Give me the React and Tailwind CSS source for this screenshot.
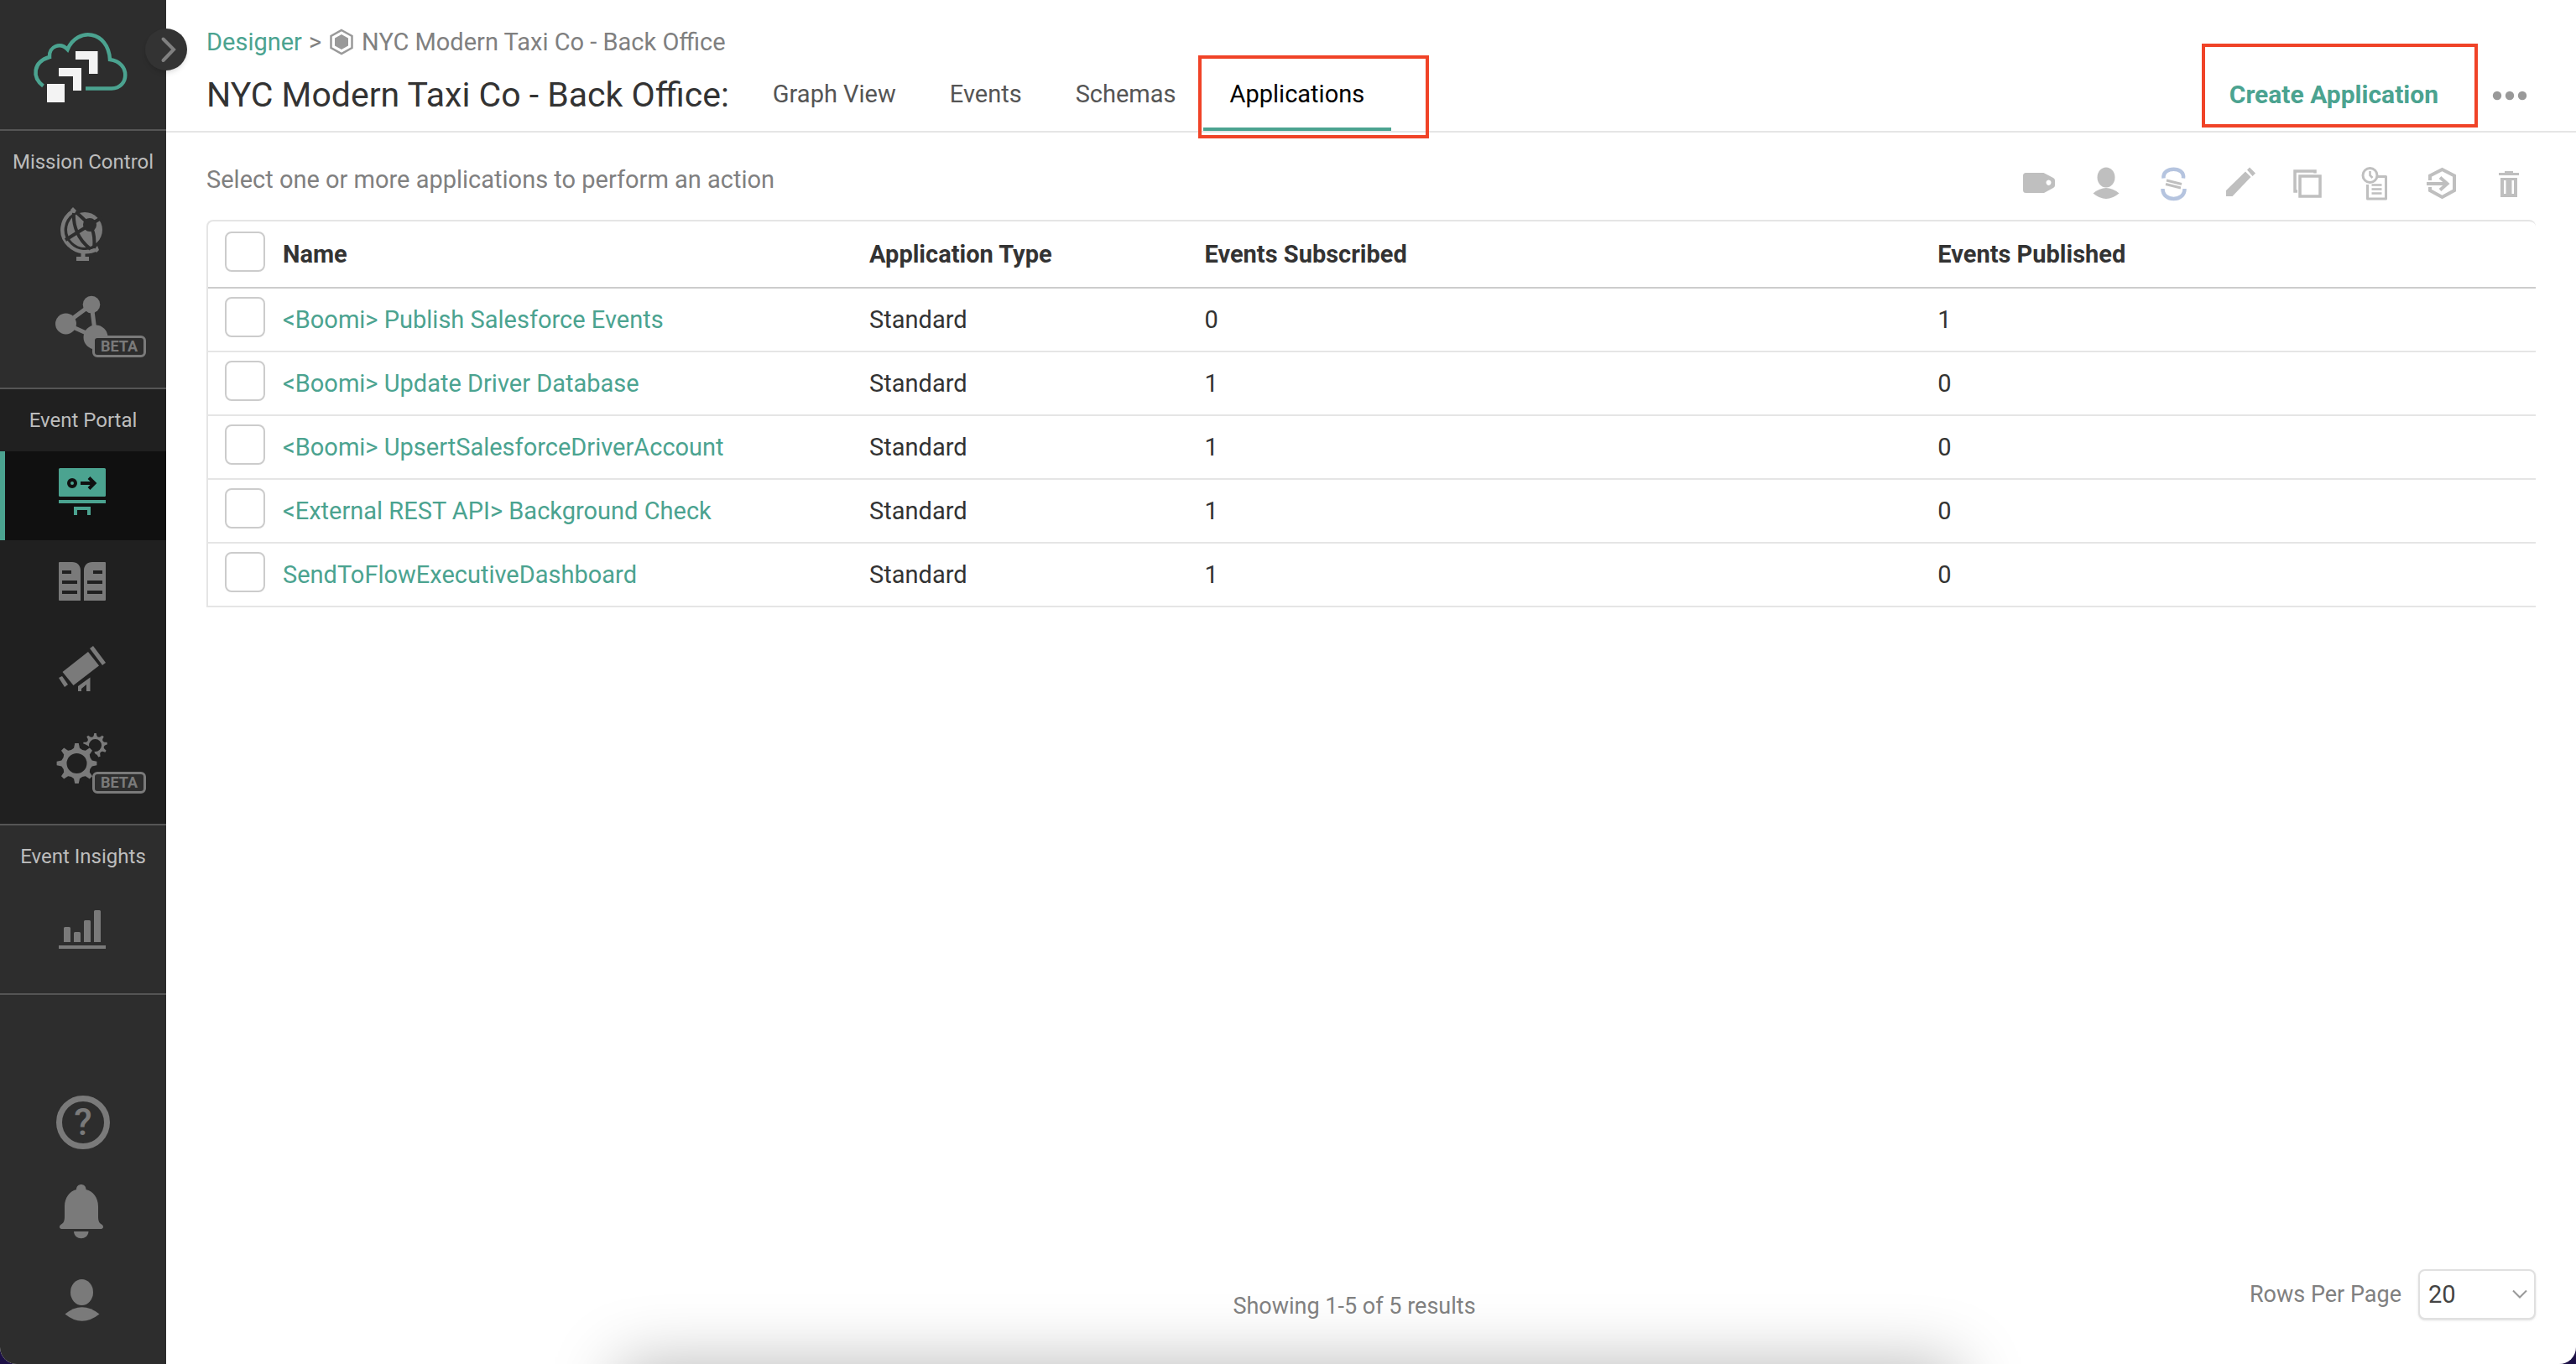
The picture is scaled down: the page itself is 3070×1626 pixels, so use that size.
import React from "react";

const gearPath = (cx, cy, teeth, rOuter, rRoot, rHole) => {
  const step = (Math.PI * 2) / teeth;
  const pt = (r, a) => `${(cx + r * Math.sin(a)).toFixed(2)} ${(cy - r * Math.cos(a)).toFixed(2)}`;
  let d = "";
  for (let i = 0; i < teeth; i += 1) {
    const a = i * step;
    const t = step * 0.12;
    const b = step * 0.24;
    d += `${i === 0 ? "M" : "L"}${pt(rRoot, a - b)}L${pt(rOuter, a - t)}L${pt(rOuter, a + t)}L${pt(rRoot, a + b)}`;
    d += `Q${pt(rRoot - 2, a + step / 2)} ${pt(rRoot, a + step - b)}`;
  }
  d += `ZM${cx - rHole} ${cy}a${rHole} ${rHole} 0 1 0 ${rHole * 2} 0a${rHole} ${rHole} 0 1 0 ${-rHole * 2} 0Z`;
  return d;
};

const Logo = () => (
  <svg viewBox="38 34 118 92" className="h-[92px] w-[118px]" aria-hidden="true">
    <path
      d="M51.500 102.500C38 92 39 74 59 68C58 55 72 50 80.500 59C92 32 129 36 131 71C156 74 154 105.500 133 105.500H102"
      fill="none"
      stroke="#4ba390"
      strokeWidth="4.500"
    />
    <path
      d="M56 100h21v22H56zM70 81h27v27H87V91H70zM90 61h26.500v27H106V71H90z"
      fill="#f3f3f3"
    />
  </svg>
);

const GlobeIcon = () => (
  <svg viewBox="19 230 160 106" className="h-[106px] w-40" aria-hidden="true">
    <path d="M87.500 251.500C72 261 70 281 82.500 292.500C92 302 106 302 115.500 297" fill="none" stroke="#7a7a7a" strokeWidth="4.500" />
    <path d="M84 250l3-3 4 4-3 5zM112 298l4-5 2 5-3 3z" fill="#7a7a7a" />
    <circle cx="101" cy="274" r="21" fill="#7a7a7a" />
    <path
      d="M107 268L92 254M107 268L122 259M107 268L78 286M107 268C113 277 113 287 112 296M88 254C87 268 92 285 108 297"
      fill="none"
      stroke="#2d2d2d"
      strokeWidth="4"
    />
    <circle cx="107" cy="268" r="8" fill="#2d2d2d" />
    <path d="M96.500 301h5v5h4.500v5H91v-5h5.500z" fill="#7a7a7a" />
  </svg>
);

const NodesIcon = () => (
  <svg viewBox="19 336 160 106" className="h-[106px] w-40" aria-hidden="true">
    <path d="M109 363L78 386L114 402Z" fill="none" stroke="#7a7a7a" strokeWidth="5" />
    <circle cx="78.500" cy="386" r="12.500" fill="#7a7a7a" />
    <circle cx="109" cy="363" r="10.300" fill="#7a7a7a" />
    <circle cx="114" cy="402" r="14.500" fill="#7a7a7a" />
  </svg>
);

const DesignerIcon = () => (
  <svg viewBox="19 539 160 106" className="h-[106px] w-40" aria-hidden="true">
    <rect x="70" y="559" width="56" height="34" rx="1.500" fill="#4ba390" />
    <circle cx="86" cy="577" r="4" fill="none" stroke="#101010" strokeWidth="4" />
    <path d="M96 577H112M106 570.500L112.500 577L106 583.500" fill="none" stroke="#101010" strokeWidth="4" />
    <path d="M70 597h56v4H70zM88 605h20v10h-4v-6H92v6h-4z" fill="#4ba390" />
  </svg>
);

const BookIcon = () => (
  <svg viewBox="19 645 160 106" className="h-[106px] w-40" aria-hidden="true">
    <path
      d="M71 671H86C92 671 96 675 96 681V717H71Q70 717 70 716V672Q70 671 71 671ZM125 671H110C104 671 100 675 100 681V717H125Q126 717 126 716V672Q126 671 125 671Z"
      fill="#7a7a7a"
    />
    <path d="M74 683h11M74 695h18M74 707h18M111 683h11M104 695h18M104 707h18" stroke="#202020" strokeWidth="4" />
  </svg>
);

const TelescopeIcon = () => (
  <svg viewBox="19 751 160 106" className="h-[106px] w-40" aria-hidden="true">
    <path
      d="M74.500 802L105 778L118 794.500L87.500 818ZM107 774L111 771L126 791L122 794ZM70 809L74 807L81 817L77 820ZM93 825V819L107.500 808.500V825H103V817L97 822V825Z"
      fill="#7a7a7a"
    />
  </svg>
);

const GearsIcon = () => (
  <svg viewBox="19 857 160 106" className="h-[106px] w-40" aria-hidden="true">
    <path d={gearPath(113.5, 889.5, 9, 14.5, 11.5, 7.5)} fill="#7a7a7a" fillRule="evenodd" />
    <path d="M113 890L99 893L108 905L113 896Z" fill="#202020" />
    <circle cx="91.500" cy="911" r="25" fill="#202020" />
    <path d={gearPath(91.5, 911, 8, 24, 18.5, 12)} fill="#7a7a7a" fillRule="evenodd" />
  </svg>
);

const BarsIcon = () => (
  <svg viewBox="19 1059 160 106" className="h-[106px] w-40" aria-hidden="true">
    <path
      d="M76 1124v-16.500q0-1.500 1.500-1.500h5q1.500 0 1.500 1.500V1124zM88 1124v-10.500q0-1.500 1.500-1.500h5q1.500 0 1.500 1.500V1124zM100 1124v-24.500q0-1.500 1.500-1.500h5q1.500 0 1.500 1.500V1124zM112 1124v-36.500q0-1.500 1.500-1.500h5q1.500 0 1.500 1.500V1124zM70 1128h56v4H70z"
      fill="#7a7a7a"
    />
  </svg>
);

const BellIcon = () => (
  <svg viewBox="19 1391 160 106" className="h-[106px] w-40" aria-hidden="true">
    <path
      d="M91 1418C91 1410 102.500 1410 102.500 1418C111 1420 117 1428 117 1438V1450C117 1455 118 1458 121 1459.500C124 1461 123.500 1465 120.500 1465H73.500C70.500 1465 70 1461 73 1459.500C76 1458 77 1455 77 1450V1438C77 1428 83 1420 91 1418ZM88 1468H105.500C105 1479 88.500 1479 88 1468Z"
      fill="#7a7a7a"
    />
  </svg>
);

const UserIcon = () => (
  <svg viewBox="19 1497 160 106" className="h-[106px] w-40" aria-hidden="true">
    <ellipse cx="97.500" cy="1540.500" rx="13.500" ry="15.500" fill="#7a7a7a" />
    <path d="M77.500 1566.500Q97.500 1550 118.500 1566.500Q97.500 1583 77.500 1566.500Z" fill="#7a7a7a" />
  </svg>
);

const Beta = () => (
  <span className="absolute left-[110px] top-16 flex h-[26px] w-16 items-center justify-center rounded-md border-3 border-[#7a7a7a] bg-[#2d2d2d] text-lg font-bold text-[#7a7a7a]">
    BETA
  </span>
);

const NavItem = ({ label, active, beta, children }) => (
  <button
    type="button"
    aria-label={label}
    className={
      active
        ? "relative flex h-[106px] w-full items-center justify-center bg-[#101010] before:absolute before:inset-y-0 before:left-0 before:w-1.5 before:bg-[#4ba390]"
        : "relative flex h-[106px] w-full items-center justify-center"
    }
  >
    {children}
    {beta && <Beta />}
  </button>
);

const NavSection = ({ title, dark, children }) => (
  <section className={dark ? "border-b-2 border-[#555] bg-[#202020] pb-5" : "border-b-2 border-[#555] bg-[#2d2d2d] pb-5"}>
    <h2 className="flex h-[74px] items-center justify-center text-2xl text-[#bdbdbd]">{title}</h2>
    {children}
  </section>
);

const tools = [
  {
    label: "Tag",
    art: <path d="M4.500 8H25.500L37 14Q39 15 39 17V23Q39 25 37 26L26 32H4.500Q1 32 1 28.500V11.500Q1 8 4.500 8ZM31.500 16.500a3 3.200 0 1 0 .01 0Z" fill="#bfbfbf" fillRule="evenodd" />,
  },
  {
    label: "Change owner",
    art: (
      <g fill="#bfbfbf">
        <ellipse cx="20" cy="13.500" rx="10.500" ry="12" />
        <path d="M4.500 32.500Q20 19.500 35.500 32.500Q20 45.500 4.500 32.500Z" />
      </g>
    ),
  },
  {
    label: "Share",
    art: (
      <g fill="none">
        <path d="M8.500 14.500C7 0 34 0 32 14.500M7.500 27C7 43 34 43 33.500 27" stroke="#b5c4df" strokeWidth="4.500" />
        <path d="M12 17L30 21.500M11 21.500L29 26" stroke="#bfbfbf" strokeWidth="3" />
      </g>
    ),
  },
  {
    label: "Edit",
    art: <path d="M3 36V29L26 6.500L32.500 13L10.500 36ZM28 4.500L31 1.500L38 8.500L34.500 12Z" fill="#bfbfbf" />,
  },
  {
    label: "Duplicate",
    art: (
      <g fill="none" stroke="#bfbfbf" strokeWidth="3.500">
        <path d="M8 30H5V6H29V8.500" />
        <rect x="11" y="12" width="24" height="24" />
      </g>
    ),
  },
  {
    label: "Version history",
    art: (
      <g fill="none" stroke="#bfbfbf" strokeWidth="3">
        <path d="M23 12.500H33.500V39H11.500V22" strokeLinejoin="round" />
        <circle cx="14.500" cy="11" r="8.500" />
        <path d="M14.500 6V11L17.500 14M16.500 22.500H28.500M16.500 27.500H28.500M16.500 32.500H28.500" strokeWidth="2.500" />
      </g>
    ),
  },
  {
    label: "Move to domain",
    art: (
      <path
        d="M6 17V11.500L20.500 4L35 11.500V29L20.500 37L6 29V25M2 21H26M18 13.500L26.500 21L18 28.500"
        fill="none"
        stroke="#bfbfbf"
        strokeWidth="4"
      />
    ),
  },
  {
    label: "Delete",
    art: (
      <path
        d="M8 8H15V6H25V8H32V11H8ZM10 14H30V37H10ZM14 17V33H16.500V17ZM23.500 17V33H26V17Z"
        fill="#bfbfbf"
        fillRule="evenodd"
      />
    ),
  },
];

const rows = [
  { name: "<Boomi> Publish Salesforce Events", type: "Standard", subscribed: 0, published: 1 },
  { name: "<Boomi> Update Driver Database", type: "Standard", subscribed: 1, published: 0 },
  { name: "<Boomi> UpsertSalesforceDriverAccount", type: "Standard", subscribed: 1, published: 0 },
  { name: "<External REST API> Background Check", type: "Standard", subscribed: 1, published: 0 },
  { name: "SendToFlowExecutiveDashboard", type: "Standard", subscribed: 1, published: 0 },
];

const Check = ({ label }) => (
  <input
    type="checkbox"
    aria-label={label}
    className="mb-1.5 ml-5 block size-12 appearance-none rounded-lg border-2 border-[#ccc] bg-white checked:bg-[#4ba390]"
  />
);

export default function App() {
  return (
    <div className="bg-[#1c1046] font-['Roboto',sans-serif] text-[29px] leading-9 text-[#333]">
      <div className="relative flex min-h-screen overflow-hidden rounded-b-[20px] bg-white">
        <aside className="relative flex w-[198px] shrink-0 flex-col bg-[#2d2d2d]">
          <div className="flex h-[156px] justify-center border-b-2 border-[#555] pr-1 pt-[34px]">
            <Logo />
          </div>
          <button
            type="button"
            aria-label="Expand menu"
            className="absolute -right-[25px] top-[34px] z-10 flex size-[50px] items-center justify-center rounded-full bg-[#333] shadow-md"
          >
            <svg viewBox="0 0 50 50" className="size-[50px]" aria-hidden="true">
              <path d="M21.500 12.500L34 25L21.500 38" fill="none" stroke="#808080" strokeWidth="4" strokeLinecap="round" />
            </svg>
          </button>
          <nav aria-label="Main">
            <NavSection title="Mission Control">
              <NavItem label="Cluster Manager"><GlobeIcon /></NavItem>
              <NavItem label="Mesh Manager" beta><NodesIcon /></NavItem>
            </NavSection>
            <NavSection title="Event Portal" dark>
              <NavItem label="Designer" active><DesignerIcon /></NavItem>
              <NavItem label="Catalog"><BookIcon /></NavItem>
              <NavItem label="Discovery"><TelescopeIcon /></NavItem>
              <NavItem label="Runtime Event Manager" beta><GearsIcon /></NavItem>
            </NavSection>
            <NavSection title="Event Insights">
              <NavItem label="Insights"><BarsIcon /></NavItem>
            </NavSection>
          </nav>
          <div className="mt-auto pb-[23px]">
            <NavItem label="Help">
              <span className="flex size-16 items-center justify-center rounded-full border-7 border-[#7a7a7a] text-[44px] font-medium text-[#7a7a7a]">?</span>
            </NavItem>
            <NavItem label="Notifications"><BellIcon /></NavItem>
            <NavItem label="Account"><UserIcon /></NavItem>
          </div>
        </aside>

        <div className="flex min-w-0 flex-1 flex-col">
          <header className="border-b-2 border-[#e5e5e5] pl-12 pt-8">
            <nav aria-label="Breadcrumb" className="flex h-9 items-center text-[#808080]">
              <a href="#designer" className="text-[#4ba390]">Designer</a>
              <span className="ml-2 mr-2.5">&gt;</span>
              <svg viewBox="0 0 28 32" className="mr-2.5 h-8 w-7" aria-hidden="true">
                <path d="M14 2L26.500 9V23L14 30L1.500 23V9Z" fill="none" stroke="#999" strokeWidth="2.500" />
                <path d="M14 7L22 11.500V20.500L14 25L6 20.500V11.500Z" fill="#999" />
              </svg>
              <span>NYC Modern Taxi Co - Back Office</span>
            </nav>
            <div className="flex h-[88px] items-stretch">
              <h1 className="mr-5 flex items-center pt-0.5 text-[41px]">NYC Modern Taxi Co - Back Office:</h1>
              <nav aria-label="Views" className="flex text-[#555]">
                <a href="#graph" className="flex items-center px-8">Graph View</a>
                <a href="#events" className="flex items-center px-8">Events</a>
                <a href="#schemas" className="flex items-center px-8">Schemas</a>
                <a
                  href="#applications"
                  aria-current="page"
                  className="relative flex items-center border-y-4 border-t-transparent border-b-[#4ba390] px-8 text-black"
                >
                  Applications
                  <span className="absolute -bottom-[13px] -left-1.5 -right-[45px] -top-1.5 border-4 border-[#f04327]" />
                </a>
              </nav>
              <div className="ml-auto flex items-center pr-[58px]">
                <button type="button" className="relative flex h-full items-center px-8 pt-0.5 text-[30px] font-bold text-[#4ba390]">
                  Create Application
                  <span className="absolute -left-px -right-[15px] -top-4 bottom-1 border-4 border-[#f04327]" />
                </button>
                <button type="button" aria-label="More actions" className="ml-8 mt-1">
                  <svg viewBox="0 0 42 12" className="h-3 w-[42px]" fill="#999" aria-hidden="true">
                    <circle cx="6" cy="6" r="5.200" />
                    <circle cx="21" cy="6" r="5.200" />
                    <circle cx="36" cy="6" r="5.200" />
                  </svg>
                </button>
              </div>
            </div>
          </header>

          <main className="flex flex-1 flex-col">
            <div className="mx-12 flex h-[104px] items-center justify-between pt-2">
              <p className="text-[#808080]">Select one or more applications to perform an action</p>
              <div className="flex gap-10 pr-3 pt-2">
                {tools.map((tool) => (
                  <button key={tool.label} type="button" disabled aria-label={tool.label}>
                    <svg viewBox="0 0 40 40" className="size-10 overflow-visible" aria-hidden="true">{tool.art}</svg>
                  </button>
                ))}
              </div>
            </div>

            <div className="mx-12 overflow-hidden rounded-t-lg border-l-2 border-t-2 border-[#e5e5e5]">
              <table className="w-full table-fixed text-left">
                <colgroup>
                  <col className="w-[89px]" />
                  <col className="w-[25.2%]" />
                  <col className="w-[14.4%]" />
                  <col className="w-[31.5%]" />
                  <col />
                </colgroup>
                <thead>
                  <tr className="h-[79px] border-b-2 border-[#ccc]">
                    <th scope="col" className="p-0"><Check label="Select all applications" /></th>
                    <th scope="col" className="p-0 font-bold">Name</th>
                    <th scope="col" className="p-0 font-bold">Application Type</th>
                    <th scope="col" className="p-0 font-bold">Events Subscribed</th>
                    <th scope="col" className="p-0 font-bold">Events Published</th>
                  </tr>
                </thead>
                <tbody>
                  {rows.map((row) => (
                    <tr key={row.name} className="h-[76px] border-b-2 border-[#e5e5e5]">
                      <td className="p-0"><Check label={`Select ${row.name}`} /></td>
                      <td className="p-0"><a href="#application" className="text-[#4ba390]">{row.name}</a></td>
                      <td className="p-0">{row.type}</td>
                      <td className="p-0">{row.subscribed}</td>
                      <td className="p-0">{row.published}</td>
                    </tr>
                  ))}
                </tbody>
              </table>
            </div>

            <footer className="relative z-10 mt-auto grid grid-cols-[1fr_auto_1fr] items-center pb-[51px] pl-2 pr-12 text-[27px] text-[#808080]">
              <p className="col-start-2 pt-7">Showing 1-5 of 5 results</p>
              <div className="flex items-center justify-end gap-5">
                <label htmlFor="rows-per-page">Rows Per Page</label>
                <div className="relative">
                  <select
                    id="rows-per-page"
                    defaultValue="20"
                    className="block h-[60px] w-[140px] appearance-none rounded-lg border-2 border-[#e0e0e0] bg-white pl-2.5 text-[29px] text-[#444] shadow-sm"
                  >
                    <option>20</option>
                    <option>50</option>
                    <option>100</option>
                  </select>
                  <svg viewBox="0 0 18 12" className="pointer-events-none absolute right-2.5 top-6 h-3 w-[18px]" aria-hidden="true">
                    <path d="M1 1.500L9 9.500L17 1.500" fill="none" stroke="#999" strokeWidth="2" />
                  </svg>
                </div>
              </div>
            </footer>
          </main>
        </div>

        <div className="pointer-events-none absolute left-[24%] right-[24%] top-full h-40 shadow-[0_0_80px_rgba(0,0,0,0.28)]" />
      </div>
    </div>
  );
}
